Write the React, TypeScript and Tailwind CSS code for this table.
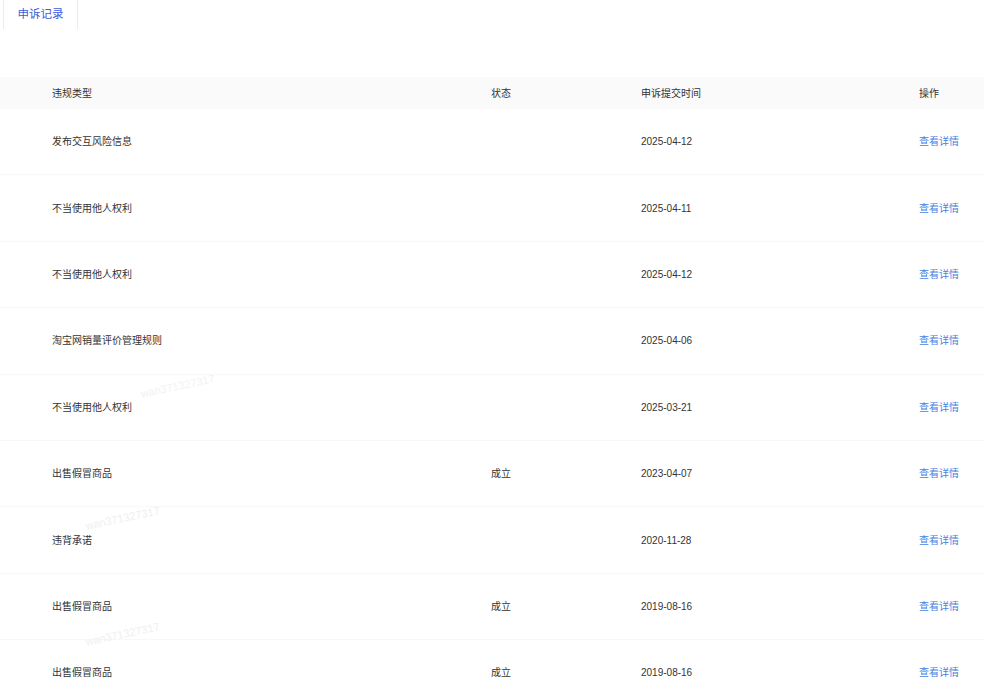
import React from "react";

type Appeal = {
  type: string;
  status: string;
  date: string;
};

const appeals: Appeal[] = [
  { type: "发布交互风险信息", status: "", date: "2025-04-12" },
  { type: "不当使用他人权利", status: "", date: "2025-04-11" },
  { type: "不当使用他人权利", status: "", date: "2025-04-12" },
  { type: "淘宝网销量评价管理规则", status: "", date: "2025-04-06" },
  { type: "不当使用他人权利", status: "", date: "2025-03-21" },
  { type: "出售假冒商品", status: "成立", date: "2023-04-07" },
  { type: "违背承诺", status: "", date: "2020-11-28" },
  { type: "出售假冒商品", status: "成立", date: "2019-08-16" },
  { type: "出售假冒商品", status: "成立", date: "2019-08-16" },
];

const font = {
  fontFamily: '"Liberation Sans", "Noto Sans CJK SC", sans-serif',
};

export default function App() {
  return (
    <div
      className="relative w-[984px] h-[689px] overflow-hidden bg-white text-[#333]"
      style={font}
    >
      {/* tabs */}
      <div className="flex pl-[3px]">
        <div className="h-[29px] w-[75px] border-x border-[#ececec] flex items-center justify-center text-[11.5px] text-[#3b5bdb]">
          申诉记录
        </div>
      </div>

      {/* table */}
      <div className="mt-[48px]">
        <div className="grid grid-cols-[439px_150px_278px_1fr] pl-[52px] h-[32px] items-center bg-[#fafafa] text-[10px]">
          <span>违规类型</span>
          <span>状态</span>
          <span>申诉提交时间</span>
          <span>操作</span>
        </div>
        {appeals.map((row, i) => (
          <div
            key={i}
            className="grid grid-cols-[439px_150px_278px_1fr] pl-[52px] h-[66.4px] items-center border-b border-[#f8f8f8] text-[10px]"
          >
            <span>{row.type}</span>
            <span>{row.status}</span>
            <span>{row.date}</span>
            <span className="text-[#4a7fe3] cursor-pointer">查看详情</span>
          </div>
        ))}
      </div>

      {/* watermarks */}
      <span className="absolute left-[140px] top-[378px] -rotate-12 text-[11px] text-[#f2f2f2] pointer-events-none select-none">
        wan371327317
      </span>
      <span className="absolute left-[85px] top-[510px] -rotate-12 text-[11px] text-[#efefef] pointer-events-none select-none">
        wan371327317
      </span>
      <span className="absolute left-[85px] top-[626px] -rotate-12 text-[11px] text-[#f0f0f0] pointer-events-none select-none">
        wan371327317
      </span>
    </div>
  );
}
